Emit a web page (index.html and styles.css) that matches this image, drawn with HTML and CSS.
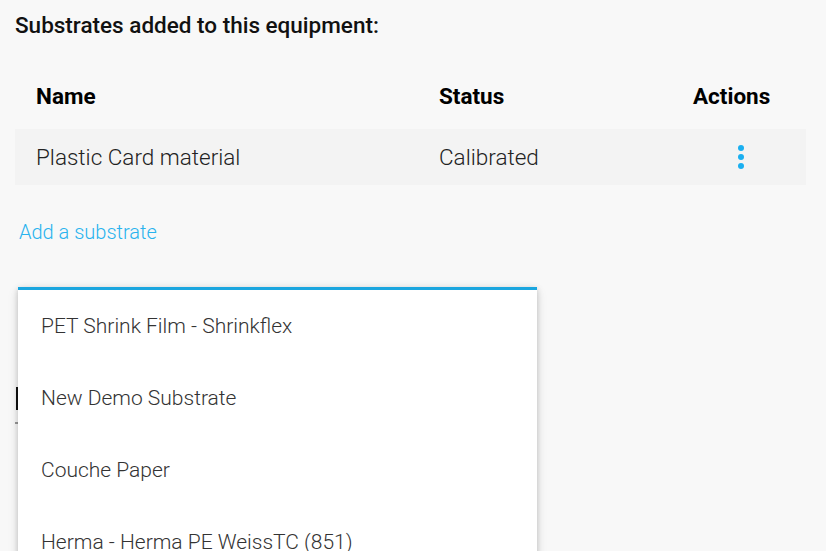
FILE: index.html
```html
<!DOCTYPE html>
<html>
<head>
<meta charset="utf-8">
<link rel="stylesheet" href="styles.css">
</head>
<body>
<div class="page">
  <h2 class="title">Substrates added to this equipment:</h2>
  <div class="table">
    <div class="thead">
      <div class="cell c-name">Name</div>
      <div class="cell c-status">Status</div>
      <div class="cell c-actions">Actions</div>
    </div>
    <div class="row">
      <div class="cell c-name">Plastic Card material</div>
      <div class="cell c-status">Calibrated</div>
      <div class="cell c-actions">
        <svg class="dots" width="8" height="24" viewBox="0 0 8 24"><circle cx="4" cy="3" r="3"/><circle cx="4" cy="12" r="3"/><circle cx="4" cy="21" r="3"/></svg>
      </div>
    </div>
  </div>
  <a class="add-link">Add a substrate</a>
  <div class="behind">
    <span class="behind-bar"></span>
    <span class="behind-dot"></span>
  </div>
  <div class="dropdown">
    <div class="item">PET Shrink Film - Shrinkflex</div>
    <div class="item">New Demo Substrate</div>
    <div class="item">Couche Paper</div>
    <div class="item">Herma - Herma PE WeissTC (851)</div>
  </div>
</div>
</body>
</html>
```
FILE: styles.css
```css
html, body {
  margin: 0;
  padding: 0;
  background: #f8f8f8;
  height: 100%;
  overflow: hidden;
}
.page {
  position: relative;
  font-family: Roboto, "Liberation Sans", sans-serif;
  color: #222;
  padding: 13px 20px 0 15px;
}
.title {
  margin: 0;
  font-size: 22.5px;
  line-height: 24px;
  font-weight: 500;
  color: #111;
}
.table {
  width: 791px;
  margin-top: 47px;
}
.thead, .row {
  display: grid;
  grid-template-columns: 403px 254px 1fr;
}
.thead {
  font-size: 22.5px;
  font-weight: 700;
  line-height: 24px;
  padding-bottom: 21px;
  color: #000;
}
.row {
  background: #f3f3f3;
  height: 56px;
  line-height: 56px;
  font-size: 22.5px;
  font-weight: 300;
  color: #222;
}
.cell {
  padding-left: 21px;
}
.row .c-actions {
  display: flex;
  align-items: center;
  padding-left: 65px;
}
.dots {
  fill: #1aaff0;
  display: block;
}
.add-link {
  display: block;
  margin-top: 35px;
  margin-left: 4px;
  font-size: 20px;
  line-height: 24px;
  font-weight: 300;
  color: #29b3ee;
}
.behind {
  height: 200px;
  position: relative;
}
.behind-bar {
  position: absolute;
  left: 1px;
  top: 143px;
  width: 2px;
  height: 23px;
  background: #111;
}
.behind-dot {
  position: absolute;
  left: 0px;
  top: 178px;
  width: 3px;
  height: 2px;
  background: #999;
}
.dropdown {
  position: absolute;
  left: 18px;
  top: 287px;
  width: 519px;
  background: #fff;
  border-top: 3px solid #1ba6df;
  box-shadow: 0 2px 6px rgba(0,0,0,0.22), 0 4px 12px rgba(0,0,0,0.08);
}
.item {
  height: 72px;
  line-height: 72px;
  padding-left: 23px;
  font-size: 21px;
  font-weight: 300;
  color: #333;
  white-space: nowrap;
}
```
